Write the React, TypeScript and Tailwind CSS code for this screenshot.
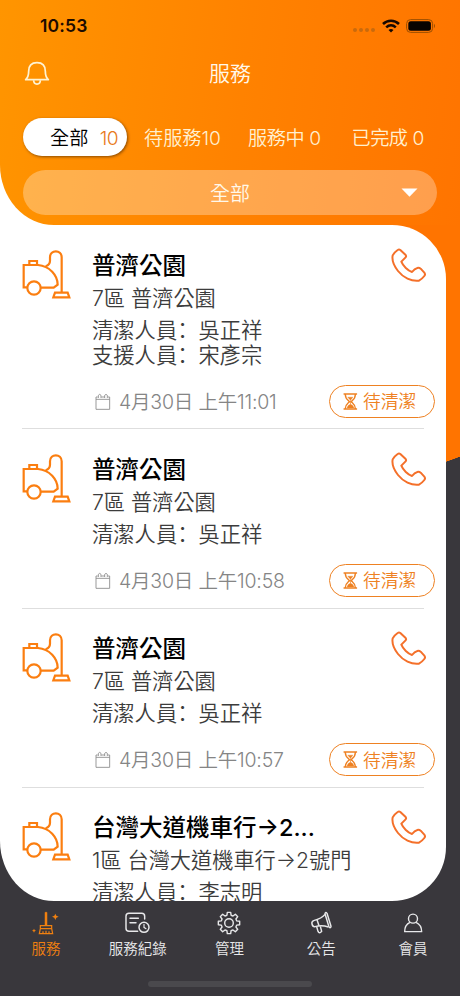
import React from 'react';

interface Job {
  title: string;
  place: string;
  staff: string;
  support?: string;
  time?: string;
}

const jobs: Job[] = [
  { title: '普濟公園', place: '7區 普濟公園', staff: '吳正祥', support: '宋彥宗', time: '4月30日 上午11:01' },
  { title: '普濟公園', place: '7區 普濟公園', staff: '吳正祥', time: '4月30日 上午10:58' },
  { title: '普濟公園', place: '7區 普濟公園', staff: '吳正祥', time: '4月30日 上午10:57' },
  { title: '台灣大道機車行→2...', place: '1區 台灣大道機車行→2號門', staff: '李志明' },
];

const BellIcon: React.FC = () => (
  <svg className="h-[25px] w-[26px]" viewBox="73 180 78 75" fill="none" stroke="#fff3d2" strokeWidth="5.2" strokeLinejoin="round">
    <path d="M78 236 C86 229 87 222 87 211 C87 194 97 185 112 185 C127 185 137 194 137 211 C137 222 138 229 146 236 Z" />
    <path d="M102 238 C102 253 122 253 122 238" />
  </svg>
);

const VacuumIcon: React.FC = () => (
  <svg className="h-[50px] w-[50px] shrink-0" viewBox="24 28 150 150" fill="none" stroke="#fb7e10" strokeWidth="6.6">
    <path d="M40 140 H29 V73 H72 C107 76 131 104 131 132 L119 141 H80" />
    <circle cx="60" cy="142" r="20" />
    <path d="M46 72 V61 H69 V72" />
    <path d="M95 77 C106 73 108 67 108 60 V50 C108 26 143 26 143 50 V156" />
    <path d="M123 156 H161 L166 170 H118 Z" />
  </svg>
);

const PhoneIcon: React.FC = () => (
  <svg className="h-[35px] w-[36px] shrink-0" viewBox="484 36 108 105" fill="none" stroke="#f4702a" strokeWidth="6" strokeLinejoin="round">
    <path d="M489 58 C492 52 497 47 504 42 Q508 39 512 42 L528 57 Q531 61 527 65 L515 77 C520 90 535 104 547 108 C553 100 558 97 563 96 Q568 94 573 98 L584 110 Q588 115 584 120 Q577 129 568 134 C545 137 520 124 505 105 C493 90 486 74 489 58 Z" />
  </svg>
);

const CalendarIcon: React.FC = () => (
  <svg className="h-[17px] w-[16px]" viewBox="286 474 48 51" fill="none" stroke="#8a8a8a" strokeWidth="2.600">
    <path d="M294 486 H289 V523 H330 V486 H325 M305 486 H315 M289 493 H330" />
    <path d="M296 489 V481 Q300 475 304 481 V489 M315 489 V481 Q319 475 323 481 V489" />
  </svg>
);

const HourglassIcon: React.FC = () => (
  <svg className="h-[17px] w-[15px]" viewBox="73 54 42 49" fill="none" stroke="#ee8122" strokeWidth="4">
    <path d="M74 57 H113 M74 100 H113 M79 58 C79 70 86 74 91 79 C86 84 79 88 79 99 M108 58 C108 70 101 74 96 79 C101 84 108 88 108 99" />
    <path d="M86 66 H101 L94 75 Z M84 97 C86 90 90 87 94 87 C98 87 102 90 104 97 Z" fill="#ee8122" strokeWidth="1" />
    <path d="M94 75 V88" strokeWidth="2" />
  </svg>
);

const BroomIcon: React.FC = () => (
  <svg className="h-[25px] w-[27px]" viewBox="99 390 81 75" fill="none" stroke="#f08010" strokeWidth="3.6">
    <path d="M138 437 V397 H144 V437" fill="#f08010" strokeWidth="1.5" />
    <path d="M124 437 H158 V446 H124 Z M124 446 L121 461 H161 L158 446 M132 461 V454 M141 461 V452 M150 461 V454" />
    <path d="M169 401 L172 407 L179 410 L172 413 L169 420 L166 413 L159 410 L166 407 Z" fill="#f08010" stroke="none" />
    <path d="M105 446 L107 450 L111 452 L107 454 L105 458 L103 454 L99 452 L103 450 Z" fill="#f08010" stroke="none" />
  </svg>
);

const RecordIcon: React.FC = () => (
  <svg className="h-[24px] w-[27px]" viewBox="376 392 81 72" fill="none" stroke="#e8e8ea" strokeWidth="4.4" strokeLinecap="round">
    <path d="M438 416 V408 Q438 399 429 399 H391 Q382 399 382 408 V444 Q382 453 391 453 H417" />
    <path d="M394 414 H419 M394 427 H412" />
    <circle cx="436" cy="441" r="15" />
    <path d="M436 432 V441 L442 445" strokeWidth="3.500" />
  </svg>
);

// Eight teeth, each one a flat tip between two shallow roots
const gearPoints = Array.from({ length: 8 })
  .flatMap((_, i) =>
    [
      [-15, 8],
      [-9, 10.8],
      [9, 10.8],
      [15, 8],
    ].map(([offset, r]) => {
      const a = ((i * 45 + offset) * Math.PI) / 180;
      return `${(12 + r * Math.cos(a)).toFixed(2)},${(12 + r * Math.sin(a)).toFixed(2)}`;
    })
  )
  .join(' ');

const GearIcon: React.FC = () => (
  <svg className="h-[24px] w-[24px]" viewBox="0 0 24 24" fill="none" stroke="#e8e8ea" strokeWidth="1.4" strokeLinejoin="round">
    <polygon points={gearPoints} />
    <circle cx="12" cy="12" r="4.3" />
  </svg>
);

const MegaphoneIcon: React.FC = () => (
  <svg className="h-[24px] w-[23px]" viewBox="241 392 69 72" fill="none" stroke="#e8e8ea" strokeWidth="4.4" strokeLinejoin="round">
    <path d="M286 400 Q288 394 292 399 L304 438 Q303 445 298 440 Z" />
    <path d="M286 402 C278 412 266 417 252 421 Q245 424 247 431 Q249 440 256 439 C270 435 284 436 296 440" />
    <path d="M262 418 L268 436 M261 439 L265 453 Q267 459 273 456 L276 453 L272 438" />
  </svg>
);

const MemberIcon: React.FC = () => (
  <svg className="h-[24px] w-[20px]" viewBox="520 393 60 70" fill="none" stroke="#e8e8ea" strokeWidth="4.2" strokeLinejoin="round">
    <circle cx="550" cy="415" r="13.500" />
    <path d="M541 426 C530 431 525 440 525 454 H576 C576 440 570 431 559 426" />
  </svg>
);

const StatusBar: React.FC = () => (
  <div className="flex h-[51px] items-center justify-between pr-[24px] pl-[40px]">
    <span className="text-[17.500px] leading-none font-semibold tracking-[0.2px] text-[#1d0b00]">10:53</span>
    <div className="flex items-center">
      <div className="mt-[9px] mr-[7px] flex gap-[2px]">
        {[0, 1, 2, 3].map((i) => (
          <span key={i} className="h-[4px] w-[4px] rounded-full bg-[#c96a0c]" />
        ))}
      </div>
      <svg className="mr-[6px] h-[14px] w-[18px]" viewBox="0 0 18 14" fill="none" stroke="#160800" strokeWidth="2.500">
        <path d="M1 5 C5.500 0.500 12.500 0.500 17 5" />
        <path d="M4.200 8.300 C7 5.700 11 5.700 13.800 8.300" />
        <path d="M9 13.500 L6.500 11 Q9 9 11.500 11 Z" fill="#160800" stroke="none" />
      </svg>
      <svg className="h-[14px] w-[30px]" viewBox="0 0 30 14">
        <rect x="0.600" y="0.600" width="26" height="12.800" rx="4" fill="none" stroke="#9c4f00" strokeWidth="1" />
        <rect x="2.300" y="2.300" width="22.600" height="9.400" rx="2.500" fill="#080300" />
        <path d="M28 4.800 Q30 7 28 9.200 Z" fill="#9c4f00" />
      </svg>
    </div>
  </div>
);

const Header: React.FC = () => (
  <div className="bg-[linear-gradient(#fff,#fff)] bg-[length:70px_70px] bg-left-bottom bg-no-repeat">
    <header className="h-[225px] rounded-bl-[54px_60px] bg-[linear-gradient(97deg,#ff9500_0%,#ff8200_52%,#ff7400_100%)]">
      <StatusBar />
      <div className="grid h-[44px] grid-cols-[1fr_auto_1fr] items-center px-[24px]">
        <BellIcon />
        <h1 className="pt-[2px] text-[21px] font-[350] text-[#fff8ea]">服務</h1>
      </div>
      <div className="mt-[23px] flex h-[38px] items-center text-[19.200px] font-[350] whitespace-nowrap text-[#fff0d0]">
        <div className="ml-[23px] flex h-[38px] w-[104px] items-center justify-between rounded-full bg-white pt-[2px] pr-[9px] pl-[27px] text-black shadow-[1px_1px_3px_rgba(60,30,0,0.6)]">
          <span>全部</span>
          <span className="tracking-[-0.6px] text-[#e87a20]">10</span>
        </div>
        <span className="ml-[17px] w-[104px] pt-[2px]">待服務10</span>
        <span className="w-[103.500px] pt-[2px] tracking-[-0.4px]">服務中 0</span>
        <span className="pt-[2px] tracking-[-0.500px]">已完成 0</span>
      </div>
      <div className="mx-[23px] mt-[14px] grid h-[45px] grid-cols-[1fr_auto_1fr] items-center rounded-full bg-white/30 pr-[19px] pl-[19px] text-[20px] font-[350] text-[#fff8ea]">
        <span />
        <span className="pt-[2px]">全部</span>
        <svg className="h-[9px] w-[17px] justify-self-end" viewBox="0 0 17 9">
          <path d="M0.500 0.500 H16.500 L8.500 8.800 Z" fill="#fff" />
        </svg>
      </div>
    </header>
  </div>
);

// The simplified face sets its full-width colon to the left of the cell
const StaffLine: React.FC<{ role: string; name: string }> = ({ role, name }) => (
  <p className="flex h-[25px] items-center leading-[25px]">
    <span>{role}</span>
    <span lang="zh-CN" className="pb-[5px] font-['Noto_Sans_CJK_SC',sans-serif] leading-[20px]">
      ：
    </span>
    <span>{name}</span>
  </p>
);

const JobRow: React.FC<{ job: Job }> = ({ job }) => (
  <article className="mr-[22px] ml-[22px] flex border-b border-[#dedede] pt-[22.500px] pb-[10.800px] last:border-0">
    <div className="w-[70px] shrink-0 pt-[2px]">
      <VacuumIcon />
    </div>
    <div className="min-w-0 flex-1">
      <div className="-mr-[3px] flex h-[34px] justify-between">
        <h2 className="pt-[1px] text-[23.500px] leading-[34px] font-medium whitespace-nowrap text-black">{job.title}</h2>
        <PhoneIcon />
      </div>
      <p className="text-[21.200px] leading-[32px] font-[350] whitespace-nowrap text-[#3c3c3c]">{job.place}</p>
      <div className="mt-[4px] text-[21.300px] font-[350] whitespace-nowrap text-[#3c3c3c]">
        <StaffLine role="清潔人員" name={job.staff} />
        {job.support && <StaffLine role="支援人員" name={job.support} />}
      </div>
      {job.time && (
        <div className="-mr-[11px] mt-[17px] flex h-[33px] items-center">
          <span className="ml-[3px]">
            <CalendarIcon />
          </span>
          <time className="ml-[8px] pt-[3px] text-[19.500px] font-[350] tracking-[-0.2px] whitespace-nowrap text-[#858585]">{job.time}</time>
          <span className="ml-auto flex h-[33px] w-[106px] items-center gap-[5px] rounded-full border-[1.500px] border-[#ee8122] pl-[13px] text-[17.800px] font-[350] whitespace-nowrap text-[#ee8122]">
            <HourglassIcon />
            <span className="pt-[3px]">待清潔</span>
          </span>
        </div>
      )}
    </div>
  </article>
);

const navItems: { label: string; icon: React.ReactNode; active?: boolean }[] = [
  { label: '服務', icon: <BroomIcon />, active: true },
  { label: '服務紀錄', icon: <RecordIcon /> },
  { label: '管理', icon: <GearIcon /> },
  { label: '公告', icon: <MegaphoneIcon /> },
  { label: '會員', icon: <MemberIcon /> },
];

const BottomNav: React.FC = () => (
  <nav className="h-[95px] bg-[#39373c]">
    <div className="mr-[1px] grid grid-cols-5 pt-[9px]">
      {navItems.map((item) => (
        <div key={item.label} className={`flex flex-col items-center ${item.active ? 'text-[#f08010]' : 'text-[#e8e8ea]'}`}>
          <div className="flex h-[25px] items-center">{item.icon}</div>
          <span className="mt-[4px] text-[14.500px] leading-[20px] font-[350]">{item.label}</span>
        </div>
      ))}
    </div>
    <div className="mx-auto mt-[22px] h-[6px] w-[164px] rounded-full bg-[#4a494d]" />
  </nav>
);

export default function App() {
  return (
    <div lang="zh-TW" className="h-[996px] w-[460px] overflow-hidden bg-[#39373c] font-['Inter','Noto_Sans_CJK_TC',sans-serif]">
      <Header />
      <main className="bg-[linear-gradient(160deg,#ff7400_50%,#39373c_52%),linear-gradient(#ff7400_234px,#39373c_234px)] bg-[length:14px_20px,100%_100%] bg-[position:right_224px,0_0] bg-no-repeat">
        <div className="h-[676px] w-[446px] overflow-hidden rounded-tr-[54px] rounded-br-[54px] rounded-bl-[54px_60px] bg-white">
          {jobs.map((job, i) => (
            <JobRow key={i} job={job} />
          ))}
        </div>
      </main>
      <BottomNav />
    </div>
  );
}
